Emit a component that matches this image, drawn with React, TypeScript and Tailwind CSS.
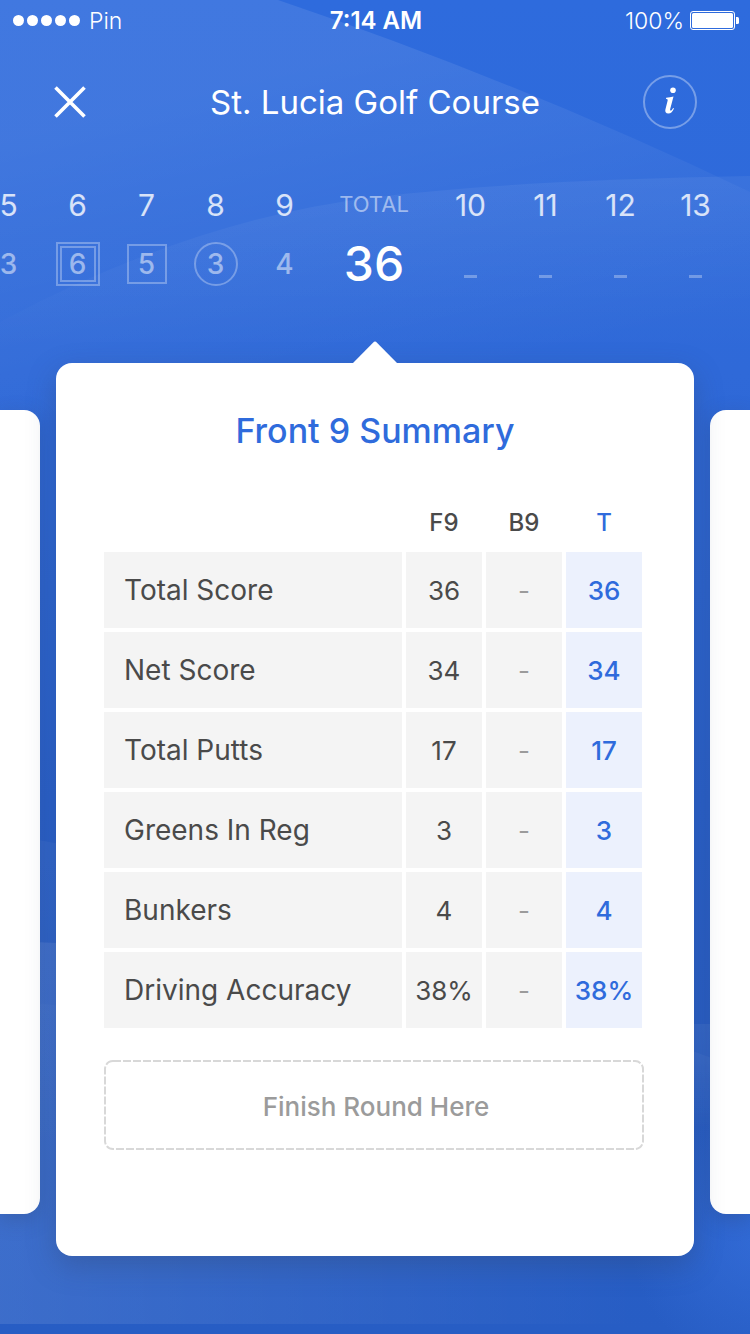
import type { ReactNode } from "react";

type Mark = "none" | "double-square" | "square" | "circle";

interface Hole {
  hole: number;
  score?: number;
  mark: Mark;
}

const frontNine: Hole[] = [
  { hole: 5, score: 3, mark: "none" },
  { hole: 6, score: 6, mark: "double-square" },
  { hole: 7, score: 5, mark: "square" },
  { hole: 8, score: 3, mark: "circle" },
  { hole: 9, score: 4, mark: "none" },
];

const backNine: Hole[] = [
  { hole: 10, mark: "none" },
  { hole: 11, mark: "none" },
  { hole: 12, mark: "none" },
  { hole: 13, mark: "none" },
];

const summary = [
  { label: "Total Score", front: "36", back: "-", total: "36" },
  { label: "Net Score", front: "34", back: "-", total: "34" },
  { label: "Total Putts", front: "17", back: "-", total: "17" },
  { label: "Greens In Reg", front: "3", back: "-", total: "3" },
  { label: "Bunkers", front: "4", back: "-", total: "4" },
  { label: "Driving Accuracy", front: "38%", back: "-", total: "38%" },
];

function Backdrop() {
  return (
    <svg
      className="absolute inset-0 h-full w-full"
      viewBox="0 0 750 1334"
      preserveAspectRatio="none"
      aria-hidden="true"
    >
      <defs>
        <linearGradient id="sky" x1="0" y1="0" x2="0" y2="1">
          <stop offset="0" stopColor="#2e6bdd" />
          <stop offset="0.28" stopColor="#2f69d8" />
          <stop offset="0.6" stopColor="#2961ce" />
          <stop offset="1" stopColor="#275dc4" />
        </linearGradient>
        <linearGradient id="hill" gradientUnits="userSpaceOnUse" x1="330" y1="60" x2="410" y2="390">
          <stop offset="0" stopColor="#fff" stopOpacity="0.09" />
          <stop offset="1" stopColor="#fff" stopOpacity="0" />
        </linearGradient>
        <linearGradient id="ridge" gradientUnits="userSpaceOnUse" x1="0" y1="180" x2="0" y2="350">
          <stop offset="0" stopColor="#fff" stopOpacity="0.055" />
          <stop offset="1" stopColor="#fff" stopOpacity="0" />
        </linearGradient>
        <linearGradient id="dune" gradientUnits="userSpaceOnUse" x1="0" y1="0" x2="640" y2="0">
          <stop offset="0" stopColor="#fff" stopOpacity="0.1" />
          <stop offset="1" stopColor="#fff" stopOpacity="0" />
        </linearGradient>
        <linearGradient id="haze" gradientUnits="userSpaceOnUse" x1="0" y1="840" x2="0" y2="1160">
          <stop offset="0" stopColor="#fff" stopOpacity="0.04" />
          <stop offset="1" stopColor="#fff" stopOpacity="0" />
        </linearGradient>
        <linearGradient id="shore" gradientUnits="userSpaceOnUse" x1="0" y1="1020" x2="0" y2="1130">
          <stop offset="0" stopColor="#fff" stopOpacity="0.06" />
          <stop offset="1" stopColor="#fff" stopOpacity="0" />
        </linearGradient>
        <radialGradient id="glow" gradientUnits="userSpaceOnUse" cx="760" cy="1240" r="130">
          <stop offset="0" stopColor="#3c76e4" stopOpacity="0.5" />
          <stop offset="1" stopColor="#3c76e4" stopOpacity="0" />
        </radialGradient>
      </defs>
      <rect width="750" height="1334" fill="url(#sky)" />
      <path d="M0 0H278Q520 82 750 192V420H0Z" fill="url(#hill)" />
      <path d="M0 322Q190 220 375 197Q520 180 750 176V350H0Z" fill="url(#ridge)" />
      <path d="M0 836Q30 838 60 844L300 900V1160H0Z" fill="url(#haze)" />
      <path d="M0 941Q400 950 640 1090V1324H0Z" fill="url(#dune)" />
      <path d="M0 1001Q40 1002 90 1010L300 1060V1160H0Z" fill="url(#haze)" />
      <path d="M640 1024H750V1130H640Z" fill="url(#shore)" />
      <path d="M640 1032L750 1072V1130H640Z" fill="url(#shore)" />
      <rect x="600" y="1100" width="150" height="234" fill="url(#glow)" />
    </svg>
  );
}

function StatusBar() {
  return (
    <div className="grid h-[42px] grid-cols-3 items-center pr-[11px] pl-[13px] text-2xl leading-7 text-white">
      <div className="flex items-center gap-2">
        <svg className="h-3 w-[68px]" viewBox="0 0 68 12" fill="#fff" role="img" aria-label="Signal strength">
          <circle cx="5.5" cy="5.5" r="5.5" />
          <circle cx="19.5" cy="5.5" r="5.5" />
          <circle cx="33.5" cy="5.5" r="5.5" />
          <circle cx="47.5" cy="5.5" r="5.5" />
          <circle cx="61.5" cy="5.5" r="5.5" />
        </svg>
        <span className="text-[23px] font-light">Pin</span>
      </div>
      <span className="text-center font-semibold">7:14 AM</span>
      <div className="flex items-center justify-end gap-[6px]">
        <span className="text-[23px] font-light">100%</span>
        <svg className="h-5 w-[49px]" viewBox="0 0 49 20" role="img" aria-label="Battery full">
          <rect x="0.5" y="0.5" width="44" height="18" rx="2.5" fill="none" stroke="#fff" />
          <rect x="2" y="2" width="41" height="15" rx="1.5" fill="#fff" />
          <path d="M46 6h1.500a1.500 1.500 0 0 1 1.500 1.500v4a1.500 1.500 0 0 1-1.500 1.500H46z" fill="#fff" />
        </svg>
      </div>
    </div>
  );
}

function Header() {
  return (
    <header className="mt-[33px] flex items-center justify-between px-[53px] text-white">
      <button type="button" aria-label="Close" className="flex h-[54px] w-[54px] items-center">
        <svg className="h-[34px] w-[34px]" viewBox="0 0 34 34" fill="none" stroke="#fff" strokeWidth="3.6">
          <path d="M2.500 2.500L31.500 31.500M31.500 2.500L2.500 31.500" />
        </svg>
      </button>
      <h1 className="text-[33px] leading-10">St. Lucia Golf Course</h1>
      <button
        type="button"
        aria-label="Course information"
        className="flex h-[54px] w-[54px] items-center justify-center rounded-full border-2 border-white/35"
      >
        <svg className="h-[30px] w-3" viewBox="0 0 12 30" fill="#fff" aria-hidden="true">
          <circle cx="9" cy="3.3" r="2.8" />
          <path d="M2.200 10.800C4.700 10.600 7.100 10.200 9.500 9.500L6.200 22c-.3 1.200 0 1.600.4 1.600.8 0 1.700-1.200 2.500-2.700l.9.500C8.700 24.400 6.900 26.400 4.300 26.400 1.800 26.400.8 24.900 1.400 22.500L3.600 13.800c.3-1.300 0-1.800-1-1.900L2 11.900z" />
        </svg>
      </button>
    </header>
  );
}

function Score({ mark, children }: { mark: Mark; children: ReactNode }) {
  if (mark === "double-square") {
    return (
      <span className="border-2 border-white/30 p-[2px]">
        <span className="flex h-9 w-9 items-center justify-center border-2 border-white/30">{children}</span>
      </span>
    );
  }
  if (mark === "square") {
    return <span className="flex h-10 w-10 items-center justify-center border-2 border-white/30">{children}</span>;
  }
  if (mark === "circle") {
    return (
      <span className="flex h-11 w-11 items-center justify-center rounded-full border-2 border-white/30">
        {children}
      </span>
    );
  }
  return <span>{children}</span>;
}

function HoleColumn({ data, width }: { data: Hole; width: string }) {
  return (
    <li className={`${width} flex shrink-0 flex-col items-center`}>
      <span className="text-[30px] leading-9 text-white/80">{data.hole}</span>
      <span className="mt-[17px] flex h-12 items-center text-[28px] leading-8 font-medium text-white/50">
        {data.score === undefined ? (
          <span className="mt-6 h-[3px] w-[13px] bg-white/30" />
        ) : (
          <Score mark={data.mark}>{data.score}</Score>
        )}
      </span>
    </li>
  );
}

function Scorecard() {
  return (
    <section aria-label="Scores by hole" className="mt-[58px] flex overflow-hidden">
      <ol className="flex min-w-0 flex-1 basis-0 justify-end pl-[2px]">
        {frontNine.map((h) => (
          <HoleColumn key={h.hole} data={h} width="w-[69px]" />
        ))}
      </ol>
      <div className="flex w-[110px] shrink-0 flex-col items-center text-white">
        <span className="text-[22px] leading-[34px] text-white/50">TOTAL</span>
        <span className="mt-[13px] text-5xl leading-[60px] font-medium">36</span>
      </div>
      <ol className="flex min-w-0 flex-1 basis-0 pl-1">
        {backNine.map((h) => (
          <HoleColumn key={h.hole} data={h} width="w-[75px]" />
        ))}
      </ol>
    </section>
  );
}

function SummaryTable() {
  return (
    <div className="-mx-1 mt-[43px]">
      <table className="w-full table-fixed border-separate border-spacing-1 text-[26px] text-[#4a4a4a]">
        <colgroup>
          <col />
          <col className="w-[76px]" />
          <col className="w-[76px]" />
          <col className="w-[76px]" />
        </colgroup>
        <thead>
          <tr className="h-12 text-2xl leading-7">
            <td />
            <th scope="col" className="p-0 pb-[2px] font-medium">F9</th>
            <th scope="col" className="p-0 pb-[2px] font-medium">B9</th>
            <th scope="col" className="p-0 pb-[2px] font-medium text-[#2f6bdc]">T</th>
          </tr>
        </thead>
        <tbody>
          {summary.map((row) => (
            <tr key={row.label} className="h-[76px]">
              <th scope="row" className="bg-[#f4f4f4] p-0 pl-5 text-left text-[28px] font-normal">
                {row.label}
              </th>
              <td className="bg-[#f4f4f4] p-0 text-center">{row.front}</td>
              <td className="bg-[#f4f4f4] p-0 text-center text-[#9b9b9b]">{row.back}</td>
              <td className="bg-[#ecf1fd] p-0 text-center font-medium text-[#2f6bdc]">{row.total}</td>
            </tr>
          ))}
        </tbody>
      </table>
    </div>
  );
}

function SummaryCard() {
  return (
    <article className="relative min-w-0 flex-1 rounded-2xl bg-white px-12 pt-[46px] pb-[106px] shadow-[0_10px_28px_rgba(50,70,110,0.35)]">
      <svg
        className="absolute -top-[22px] left-1/2 h-[23px] w-[46px] -translate-x-1/2"
        viewBox="0 0 46 23"
        fill="#fff"
        aria-hidden="true"
      >
        <path d="M0 23L22 .8Q23 0 24 .8L46 23Z" />
      </svg>
      <h2 className="text-center text-[34px] leading-[44px] font-medium text-[#2f6bdc]">Front 9 Summary</h2>
      <div className="pr-1">
        <SummaryTable />
      </div>
      <div className="pr-[2px]">
        <button
          type="button"
          className="relative mt-7 flex h-[90px] w-full items-center justify-center pt-[2px] pl-1 text-[26px] font-medium text-[#9b9b9b]"
        >
          <svg className="absolute inset-0 h-full w-full overflow-visible p-px" aria-hidden="true">
            <rect
              width="100%"
              height="100%"
              rx="8"
              fill="none"
              stroke="#d8d8d8"
              strokeWidth="2"
              strokeDasharray="8 2"
            />
          </svg>
          Finish Round Here
        </button>
      </div>
    </article>
  );
}

export default function App() {
  return (
    <main className="relative min-h-screen overflow-hidden bg-[#275dc4] font-['Inter','Liberation_Sans',sans-serif]">
      <Backdrop />
      <div className="relative pb-[78px]">
        <StatusBar />
        <Header />
        <Scorecard />
        <div className="mt-[69px] flex gap-4">
          <div className="mt-[47px] mb-[42px] w-10 shrink-0 rounded-r-2xl bg-white shadow-[0_6px_20px_rgba(50,70,110,0.3)]" />
          <SummaryCard />
          <div className="mt-[47px] mb-[42px] w-10 shrink-0 rounded-l-2xl bg-white shadow-[0_6px_20px_rgba(50,70,110,0.3)]" />
        </div>
      </div>
    </main>
  );
}
